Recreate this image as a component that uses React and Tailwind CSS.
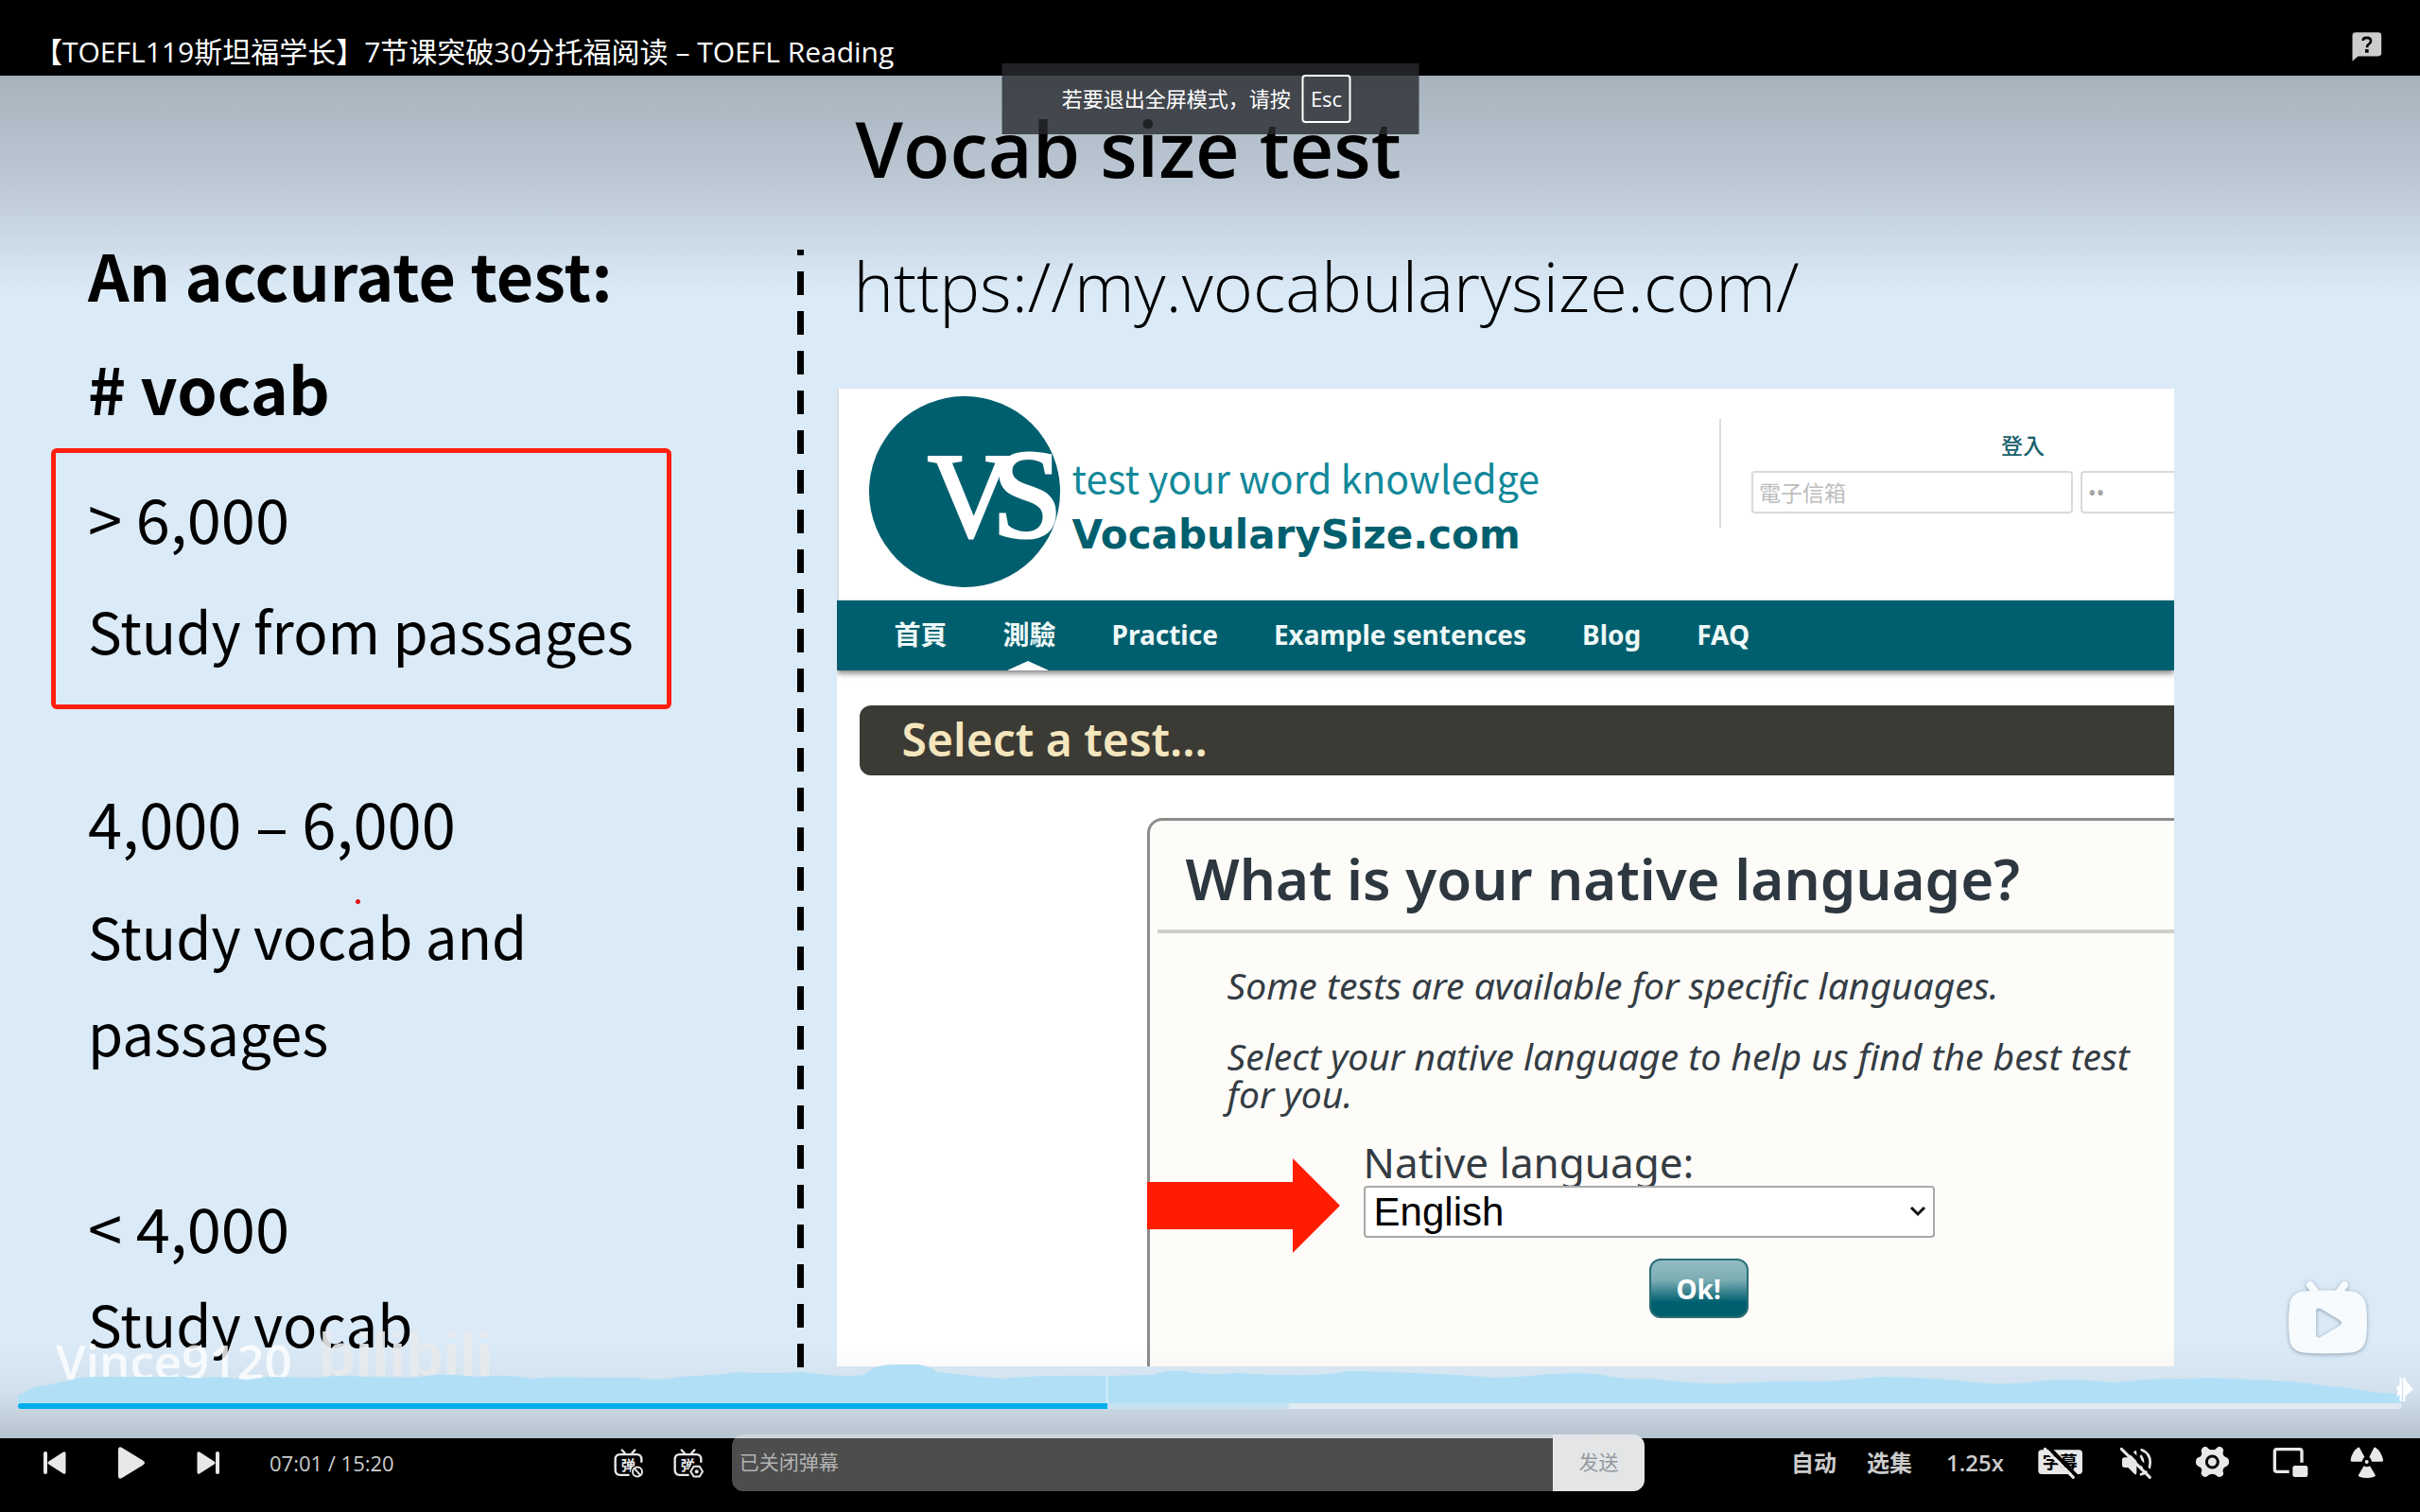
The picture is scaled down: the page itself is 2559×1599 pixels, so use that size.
const CJK = "font-['Open_Sans','Noto_Sans_CJK_SC',sans-serif]";
const NARROW = "font-['Noto_Sans_CJK_SC','Liberation_Sans',sans-serif]";
const HUMAN = "font-['Noto_Sans','Noto_Sans_CJK_TC',sans-serif]";

function PrevIcon() {
  return (
    <svg viewBox="0 0 26 26" className="size-[26px]" fill="#e8e8e8">
      <rect x="1" y="1" width="4" height="24" rx="2" />
      <path d="M22 1.600Q24.500 0.200 24.500 3.500V22.500Q24.500 25.800 22 24.400L6.500 14.600Q4.500 13 6.500 11.400Z" />
    </svg>
  );
}

function NextIcon() {
  return (
    <svg viewBox="0 0 26 26" className="size-[26px]" fill="#e8e8e8">
      <rect x="21" y="1" width="4" height="24" rx="2" />
      <path d="M4 1.600Q1.500 0.200 1.500 3.500V22.500Q1.500 25.800 4 24.400L19.500 14.600Q21.500 13 19.500 11.400Z" />
    </svg>
  );
}

function PlayIcon() {
  return (
    <svg viewBox="0 0 32 36" className="h-9 w-8" fill="#e8e8e8">
      <path d="M2 4Q2 0 6 2L28 15.500Q32 18 28 20.500L6 34Q2 36 2 32Z" />
    </svg>
  );
}

function DanmakuTv({ children }) {
  return (
    <svg viewBox="28 62 102 98" className="h-[33px] w-[34px]" fill="none" stroke="#e8e8e8" strokeLinecap="round">
      <path d="M54 69L63 79M95 69L86 79" strokeWidth="7" />
      <path d="M75 148H48Q33 148 33 132V99Q33 83 48 83H101Q116 83 116 99V106" strokeWidth="7" />
      <text
        x="51"
        y="133"
        fontSize="46"
        fontWeight="700"
        fontFamily="Noto Sans CJK SC, sans-serif"
        fill="#e8e8e8"
        stroke="none"
      >
        弹
      </text>
      {children}
    </svg>
  );
}

function DanmakuOffIcon() {
  return (
    <DanmakuTv>
      <circle cx="103" cy="138" r="21" fill="#000" stroke="none" />
      <circle cx="103" cy="138" r="15" strokeWidth="6" />
      <path d="M94 128L112 148" strokeWidth="6" />
    </DanmakuTv>
  );
}

function DanmakuSettingsIcon() {
  return (
    <DanmakuTv>
      <path d="M87 111H117L129 137L117 160H87L74 137Z" fill="#000" stroke="none" />
      <path d="M93 121H111L121 137L111 153H93L83 137Z" strokeWidth="6" strokeLinejoin="round" />
      <circle cx="102" cy="137" r="6" fill="#e8e8e8" stroke="none" />
    </DanmakuTv>
  );
}

function SubtitleOffIcon() {
  return (
    <svg viewBox="45 45 144 102" className="h-[34px] w-12">
      <rect x="46" y="55" width="140" height="77" rx="11" fill="#e8e8e8" />
      <text x="59" y="115" fontSize="56" fontWeight="700" fontFamily="Noto Sans CJK SC, sans-serif" fill="#000">
        字幕
      </text>
      <path d="M76 44L170 140" stroke="#000" strokeWidth="12" />
      <path d="M67 52L157 142" stroke="#e8e8e8" strokeWidth="9" strokeLinecap="round" />
    </svg>
  );
}

function MutedIcon() {
  return (
    <svg viewBox="303 45 105 102" className="h-[34px] w-[35px]">
      <path
        d="M320 79H331L351 59Q358 54 358 63V127Q358 136 351 131L331 111H320Q312 111 312 103V87Q312 79 320 79Z"
        fill="#e8e8e8"
      />
      <path d="M372 75Q384 93 372 114" fill="none" stroke="#e8e8e8" strokeWidth="8" strokeLinecap="round" />
      <path d="M374 55Q401 66 401 95Q401 124 372 133" fill="none" stroke="#e8e8e8" strokeWidth="8" strokeLinecap="round" />
      <path d="M319 42L413 137" stroke="#000" strokeWidth="12" />
      <path d="M310 52L400 142" stroke="#e8e8e8" strokeWidth="9" strokeLinecap="round" />
    </svg>
  );
}

function GearIcon() {
  return (
    <svg viewBox="549 45 105 102" className="h-[34px] w-[35px]">
      <path
        d="M571 48Q578 42 585 47Q590 55 601 55Q612 55 617 47Q624 42 632 48Q639 54 635 62Q633 75 646 79Q655 82 654 93Q655 104 646 107Q633 111 635 124Q639 132 632 138Q624 144 617 139Q612 131 601 131Q590 131 585 139Q578 144 571 138Q563 132 567 124Q570 111 557 107Q548 104 549 93Q548 82 557 79Q570 75 567 62Q563 54 571 48Z"
        fill="#e8e8e8"
      />
      <circle cx="601" cy="93" r="18" fill="none" stroke="#000" strokeWidth="9" />
    </svg>
  );
}

function PipIcon() {
  return (
    <svg viewBox="790 45 114 102" className="h-[34px] w-[38px]">
      <path
        d="M843 124H804Q797 124 797 117V60Q797 53 804 53H876Q883 53 883 60V95"
        fill="none"
        stroke="#e8e8e8"
        strokeWidth="10"
      />
      <rect x="854" y="105" width="48" height="36" rx="7" fill="#e8e8e8" />
    </svg>
  );
}

function FullscreenIcon() {
  return (
    <svg viewBox="1034 45 108 102" className="h-[34px] w-9" fill="#e8e8e8">
      <path d="M1064 48L1080 77Q1073 84 1072 92H1040Q1035 92 1036 86Q1040 62 1058 48Q1062 45 1064 48Z" />
      <path d="M1110 48L1095 77Q1102 84 1103 92H1135Q1140 92 1139 86Q1134 62 1116 48Q1112 45 1110 48Z" />
      <path d="M1078 106Q1088 112 1097 106L1114 134Q1116 138 1111 140Q1088 148 1064 140Q1059 138 1061 134Z" />
      <circle cx="1087" cy="93" r="6" />
    </svg>
  );
}

function HelpIcon() {
  return (
    <svg viewBox="50 42 96 94" className="h-[31px] w-8">
      <path d="M62 43H134Q144 43 144 53V109Q144 119 134 119H69L51 135V53Q51 43 62 43Z" fill="#ccc" />
      <path d="M85 69Q85 60 97 60Q110 60 110 70Q110 77 103 81Q98 84 98 91" fill="none" stroke="#000" strokeWidth="8" />
      <rect x="92" y="97" width="11" height="11" fill="#000" />
    </svg>
  );
}

function PlayerLogo() {
  return (
    <svg viewBox="0 0 90 86" className="h-[86px] w-[90px] drop-shadow-[0_1px_2px_rgba(60,80,100,0.5)]">
      <path d="M25 9L33 20M61 9L53 20" stroke="#f7fbfe" strokeWidth="8" strokeLinecap="round" />
      <path
        fillRule="evenodd"
        fill="#f7fbfe"
        d="M18 15.500Q43 13.500 68 15.500Q82 17 84 31Q86 48 84 65Q82 79 68 80.500Q43 82.500 18 80.500Q4 79 3 65Q1 48 3 31Q4 17 18 15.500ZM31 37V60Q31 66 36 64L56 52Q60 49 56 46L36 34Q31 32 31 37Z"
      />
    </svg>
  );
}

function VsLogo() {
  return (
    <svg viewBox="0 0 204 204" className="size-[204px] shrink-0">
      <circle cx="101" cy="102" r="101" fill="#005f6e" />
      <text
        x="62"
        y="149"
        fontSize="126"
        fontFamily="Liberation Serif, serif"
        fill="#fff"
        stroke="#fff"
        strokeWidth="3"
      >
        V
      </text>
      <text
        x="130"
        y="150"
        fontSize="134"
        fontFamily="Liberation Serif, serif"
        fill="#fff"
        stroke="#fff"
        strokeWidth="3"
      >
        S
      </text>
    </svg>
  );
}

function StudyGuide() {
  return (
    <section className={"flex w-[33.2%] shrink-0 justify-between text-[60px] leading-[102px] whitespace-nowrap text-black " + NARROW}>
      <div className="pt-[150px] pb-[71px] pl-[54px]">
        <div className="pl-[39px] text-[68px] leading-[120px] font-bold">
          <h2>An accurate test:</h2>
          <h2># vocab</h2>
        </div>
        <div className="mt-1 w-[656px] rounded-md border-[5px] border-[#ff1f10] pt-[17px] pb-7 pl-[34px]">
          <p className="text-[65px]">&gt; 6,000</p>
          <p className="mt-[17px]">Study from passages</p>
        </div>
        <div className="mt-[69px] pl-[39px]">
          <p className="text-[65px]">4,000 – 6,000</p>
          <p className="mt-[17px]">
            Study vocab and
            <br />
            passages
          </p>
        </div>
        <div className="mt-[104px] pl-[39px]">
          <p className="text-[65px]">&lt; 4,000</p>
          <p>Study vocab</p>
        </div>
      </div>
      <div className="mt-[184px] mb-[75px] w-[7px] bg-[repeating-linear-gradient(to_bottom,#000_0px,#000_6px,transparent_6px,transparent_23px,#000_23px,#000_42px)]" />
    </section>
  );
}

const NAV = ["首頁", "測驗", "Practice", "Example sentences", "Blog", "FAQ"];

function VocabSite() {
  return (
    <div className={"flex flex-1 flex-col overflow-hidden bg-white " + HUMAN}>
      <header className="flex h-56 items-start justify-between border-l-2 border-[#d8dde2]">
        <div className="flex pt-[7px] pl-8">
          <VsLogo />
          <div className="pt-[56px] pl-[11px] whitespace-nowrap">
            <p className={"text-[41px] leading-[60px] text-[#12899a] " + NARROW}>test your word knowledge</p>
            <p className="mt-2 font-['DejaVu_Sans',sans-serif] text-[42px] leading-[48px] font-bold text-[#005f6e]">
              VocabularySize.com
            </p>
          </div>
        </div>
        <form className="mt-8 h-[115px] w-[481px] shrink-0 border-l-2 border-[#dcdcdc] pt-[10px] pl-8 text-[23px]">
          <p className="pl-[264px] leading-9 font-medium text-[#16606c]">登入</p>
          <div className="mt-[9px] flex gap-2">
            <input
              aria-label="電子信箱"
              placeholder="電子信箱"
              className="h-[45px] w-[340px] shrink-0 rounded-sm border-2 border-[#dadada] px-[6px] placeholder:text-[#bdbdbd]"
            />
            <input
              aria-label="密碼"
              placeholder="••"
              className="h-[45px] min-w-0 flex-1 rounded-l-sm border-2 border-r-0 border-[#dadada] px-[6px] placeholder:text-[#a5a5a5]"
            />
          </div>
        </form>
      </header>
      <nav className="relative z-10 flex h-[74px] gap-[59px] bg-[#005f6e] pl-[61px] text-[28px] leading-[72px] font-bold whitespace-nowrap text-[#eef8f8] shadow-[0_3px_6px_rgba(0,0,0,0.5)]">
        {NAV.map((item, i) => (
          <a key={item} href="#" className="relative">
            {item}
            {i === 1 && (
              <svg viewBox="0 0 44 10" className="absolute bottom-0 left-1 h-[10px] w-11" fill="#fff">
                <path d="M0 10L22 0L44 10Z" />
              </svg>
            )}
          </a>
        ))}
      </nav>
      <h3 className="mt-[37px] ml-6 h-[74px] rounded-l-xl bg-[#3c3a35] pl-[45px] text-[48px] leading-[72px] font-semibold text-[#f4e6bd]">
        Select a test...
      </h3>
      <div className="relative mt-[45px] ml-[328px] flex-1 rounded-tl-2xl border-t-[3px] border-l-[3px] border-[#8d8d8b] bg-[#fdfcf8] text-[#343c44]">
        <h3 className="ml-2 border-b-4 border-[#d0cfca] pt-2 pl-[30px] text-[60px] leading-[107px] font-semibold whitespace-nowrap text-[#2d3740]">
          What is your native language?
        </h3>
        <div className="pt-[35px] pl-[82px] text-[39px] leading-10 whitespace-nowrap italic">
          <p>Some tests are available for specific languages.</p>
          <p className="mt-[35px]">
            Select your native language to help us find the best test
            <br />
            for you.
          </p>
        </div>
        <div className="mt-[27px] ml-[226px] flex w-[604px] flex-col">
          <label htmlFor="native" className="text-[44px] leading-[50px]">
            Native language:
          </label>
          <div className="relative">
            <select
              id="native"
              className="block h-[55px] w-full appearance-none rounded-sm border-2 border-[#a9a9a9] bg-white pl-[9px] font-['Liberation_Sans',sans-serif] text-[42px] leading-[50px] text-black"
            >
              <option>English</option>
            </select>
            <svg viewBox="0 0 20 14" className="pointer-events-none absolute top-5 right-2 h-[14px] w-5">
              <path d="M3 3L10 10L17 3" fill="none" stroke="#111" strokeWidth="3" />
            </svg>
          </div>
          <button className="mt-[22px] ml-[302px] h-[63px] w-[105px] rounded-xl border-2 border-[#2c6f78] bg-[linear-gradient(to_bottom,#92bcc2_0%,#7cadb4_35%,#005f6e_75%)] font-['Noto_Sans',sans-serif] text-[28px] leading-8 font-bold text-white">
            Ok!
          </button>
        </div>
        <svg viewBox="0 0 204 100" className="absolute top-[357px] -left-[3px] h-[100px] w-[204px]">
          <path d="M0 25H154V0L204 50L154 100V75H0Z" fill="#ff1c00" />
        </svg>
      </div>
    </div>
  );
}

function SlideRight() {
  return (
    <section className="flex min-w-0 flex-1 flex-col pt-[27px] pr-[260px] pb-[76px] pl-[35px]">
      <h1 className="pl-5 font-['Open_Sans',sans-serif] text-[81px] leading-[100px] font-semibold whitespace-nowrap text-black">
        Vocab size test
      </h1>
      <p className="mt-[45px] mb-[59px] pl-[18px] font-['Open_Sans',sans-serif] text-[72px] leading-[100px] font-light whitespace-nowrap text-black">
        https://my.vocabularysize.com/
      </p>
      <VocabSite />
    </section>
  );
}

function Progress() {
  return (
    <div className="absolute inset-x-[19px] bottom-[31px]">
      <svg viewBox="0 0 2522 42" preserveAspectRatio="none" className="block h-[42px] w-full">
        <path
          d="M0 42V33Q6 32 12 27Q22 23 32 23Q44 19 54 18Q66 14 80 14H176Q190 17 206 14Q222 14 240 17Q252 16 265 14L320 15Q345 11 362 14L420 15Q435 11 465 12Q480 15 505 13Q520 12 545 16Q570 13 600 15L655 15Q680 19 700 14Q745 12 760 9Q790 11 830 9Q870 15 895 12Q907 1 925 1H952Q967 3 972 9Q1010 13 1040 16Q1080 12 1150 13L1200 12Q1222 4 1245 10Q1268 12 1290 10Q1330 13 1370 12Q1395 11 1405 8Q1440 8 1475 10Q1530 12 1560 15Q1585 15 1610 12Q1640 9 1670 11Q1700 18 1730 16Q1775 22 1810 21Q1860 18 1910 19Q1940 17 1970 14Q2030 15 2060 19Q2110 24 2140 18Q2180 16 2220 20Q2250 16 2290 16Q2330 14 2361 17Q2400 18 2425 21Q2440 24 2462 25Q2480 29 2500 31Q2515 31 2522 34V42Z"
          fill="#b1e0f6"
        />
        <path d="M1152 13V42" stroke="#d4eefa" strokeWidth="2" />
      </svg>
      <div className="h-[6px] rounded-full bg-[#dfeaf3]">
        <div className="h-full w-[53.3%] rounded-full bg-[#c7e2f0]">
          <div className="h-full w-[85.7%] rounded-l-full bg-[#00aeec]" />
        </div>
      </div>
      <svg viewBox="0 0 56 74" className="absolute top-[15px] -right-3 h-[25px] w-[19px] fill-white">
        <path d="M13 0H20V74H13ZM24 0H31V74H24ZM31 8L56 36L31 58ZM2 30L13 22V52L2 60L8 44Z" />
      </svg>
    </div>
  );
}

function ExitHint() {
  return (
    <div
      className={
        "absolute top-[67px] left-1/2 z-20 flex h-[75px] w-[441px] -translate-x-1/2 items-center justify-center gap-3 bg-[rgba(40,43,48,0.8)] pr-2 text-[22px] whitespace-nowrap text-white " +
        CJK
      }
    >
      <span>若要退出全屏模式，请按</span>
      <kbd className="rounded-sm border-2 border-white px-[7px] font-['Open_Sans',sans-serif] leading-[47px]">Esc</kbd>
    </div>
  );
}

function Controls() {
  return (
    <footer className={"relative z-10 flex bg-black text-[#ccc] " + CJK}>
      <div className="-mt-1 mb-[22px] flex h-[60px] w-full items-center">
        <div className="flex w-1/4 shrink-0 items-center pl-[45px]">
          <button aria-label="上一个"><PrevIcon /></button>
          <button aria-label="播放" className="ml-[52px]"><PlayIcon /></button>
          <button aria-label="下一个" className="ml-[52px]"><NextIcon /></button>
          <span className="ml-[52px] text-[22px] whitespace-nowrap">07:01 / 15:20</span>
        </div>
        <div className="flex min-w-0 flex-1 items-center pl-[9px]">
          <button aria-label="弹幕开关"><DanmakuOffIcon /></button>
          <button aria-label="弹幕设置" className="ml-[29px]"><DanmakuSettingsIcon /></button>
          <div className="ml-7 flex h-[60px] min-w-0 flex-1 overflow-hidden rounded-xl text-[21px]">
            <input
              aria-label="弹幕"
              placeholder="已关闭弹幕"
              className="min-w-0 flex-1 bg-white/30 pl-2 placeholder:text-[#b3b3b3]"
            />
            <button className="w-[97px] shrink-0 bg-[#e3e5e7] text-[#9499a0]">发送</button>
          </div>
        </div>
        <div className="ml-[155px] flex shrink-0 items-center pr-[38px] text-[24px] font-semibold">
          <button>自动</button>
          <button className="ml-8">选集</button>
          <button className="ml-9">1.25x</button>
          <button aria-label="字幕" className="ml-9"><SubtitleOffIcon /></button>
          <button aria-label="静音" className="ml-[38px]"><MutedIcon /></button>
          <button aria-label="设置" className="ml-[46px]"><GearIcon /></button>
          <button aria-label="画中画" className="ml-[46px]"><PipIcon /></button>
          <button aria-label="退出全屏" className="ml-11"><FullscreenIcon /></button>
        </div>
      </div>
    </footer>
  );
}

export default function App() {
  return (
    <div className="relative flex min-h-screen flex-col overflow-hidden bg-black">
      <header className={"flex h-20 items-start justify-between pr-10 pl-9 text-white " + CJK}>
        <h1 className="pt-8 text-[30px] leading-[46px] whitespace-nowrap">
          【TOEFL119斯坦福学长】7节课突破30分托福阅读 – TOEFL Reading
        </h1>
        <button aria-label="帮助" className="mt-[34px]"><HelpIcon /></button>
      </header>
      <main className="relative flex bg-[#dbeaf7]">
        <StudyGuide />
        <SlideRight />
        <span className="absolute top-[871px] left-[376px] size-[5px] rounded-full bg-[#e0141c]" />
        <div className="absolute inset-x-0 top-0 h-[230px] bg-[linear-gradient(to_bottom,rgba(0,0,0,0.24),rgba(0,0,0,0.14)_50%,transparent)]" />
        <div className="absolute inset-x-0 bottom-0 h-[100px] bg-[linear-gradient(to_top,rgba(0,0,0,0.17),rgba(0,0,0,0.04)_50%,transparent)]" />
        <div className="absolute bottom-12 left-[59px] flex items-end gap-7">
          <span className="font-['Open_Sans',sans-serif] text-[51px] leading-[68px] font-semibold text-white/80">
            Vince9120
          </span>
          <span className="font-['Liberation_Sans',sans-serif] text-[64px] leading-[80px] font-bold text-[#e8eaec]/90">
            bilibili
          </span>
        </div>
        <div className="absolute right-[51px] bottom-[85px]">
          <PlayerLogo />
        </div>
        <Progress />
      </main>
      <Controls />
      <ExitHint />
    </div>
  );
}
